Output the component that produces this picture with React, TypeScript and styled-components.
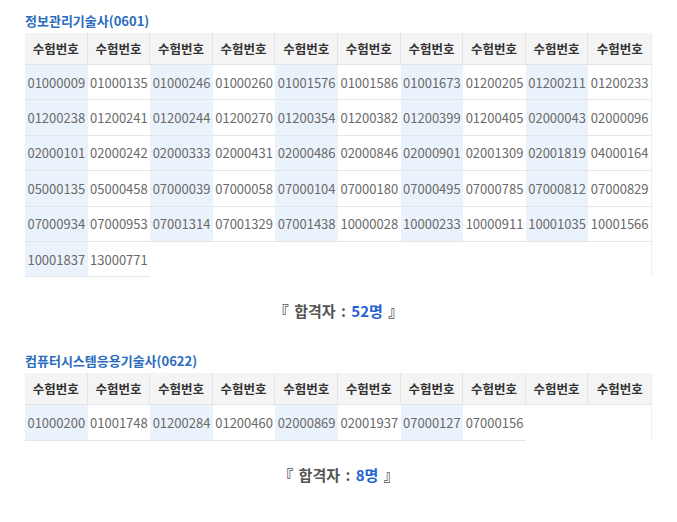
import styled, { createGlobalStyle } from "styled-components";

const GlobalStyle = createGlobalStyle`
  body {
    margin: 0;
    background: #ffffff;
    font-family: "Noto Sans CJK KR", "Noto Sans", sans-serif;
  }
`;

const Page = styled.div`
  padding: 11px 0 0 25px;
  width: 627px;
`;

const Title = styled.h3`
  margin: 0 0 2px;
  font-size: 13px;
  line-height: 20px;
  font-weight: bold;
  color: #2b6cc0;
`;

const Table = styled.div`
  display: grid;
  grid-template-columns: repeat(10, 1fr);
  border-right: 1px solid #eeeeee;
`;

const HeadCell = styled.div`
  height: 32px;
  box-sizing: border-box;
  display: flex;
  align-items: center;
  justify-content: center;
  background: #f4f4f4;
  border-right: 1px solid #e4e4e4;
  border-bottom: 1px solid #e4e4e4;
  font-size: 12.5px;
  font-weight: bold;
  color: #333;
  &:nth-child(10) {
    border-right: none;
  }
`;

const Cell = styled.div<{ $shade: boolean }>`
  height: 35.4px;
  box-sizing: border-box;
  display: flex;
  align-items: center;
  justify-content: center;
  background: ${(p) => (p.$shade ? "#eaf2fb" : "#ffffff")};
  border-bottom: 1px solid #e6e6e6;
  font-size: 13px;
  color: #6a6a6a;
`;

const Summary = styled.p`
  margin: 0;
  padding: 24px 0 24px;
  line-height: 20px;
  text-align: center;
  font-size: 15px;
  font-weight: bold;
  word-spacing: 2px;
  color: #555;
`;

const Count = styled.span`
  color: #1f62d0;
`;

const SecondTitle = styled(Title)`
  margin-top: 6px;
`;

const data1 = [
  "01000009", "01000135", "01000246", "01000260", "01001576", "01001586", "01001673", "01200205", "01200211", "01200233",
  "01200238", "01200241", "01200244", "01200270", "01200354", "01200382", "01200399", "01200405", "02000043", "02000096",
  "02000101", "02000242", "02000333", "02000431", "02000486", "02000846", "02000901", "02001309", "02001819", "04000164",
  "05000135", "05000458", "07000039", "07000058", "07000104", "07000180", "07000495", "07000785", "07000812", "07000829",
  "07000934", "07000953", "07001314", "07001329", "07001438", "10000028", "10000233", "10000911", "10001035", "10001566",
  "10001837", "13000771",
];

const data2 = ["01000200", "01001748", "01200284", "01200460", "02000869", "02001937", "07000127", "07000156"];

const ResultTable = ({ items }: { items: string[] }) => (
  <Table>
    {Array.from({ length: 10 }).map((_, i) => (
      <HeadCell key={"h" + i}>수험번호</HeadCell>
    ))}
    {items.map((n, i) => (
      <Cell key={n} $shade={i % 2 === 0}>
        {n}
      </Cell>
    ))}
  </Table>
);

export default function App() {
  return (
    <Page>
      <GlobalStyle />
      <Title>정보관리기술사(0601)</Title>
      <ResultTable items={data1} />
      <Summary>
        『 합격자 : <Count>{data1.length}명</Count> 』
      </Summary>
      <SecondTitle>컴퓨터시스템응용기술사(0622)</SecondTitle>
      <ResultTable items={data2} />
      <Summary>
        『 합격자 : <Count>{data2.length}명</Count> 』
      </Summary>
    </Page>
  );
}
